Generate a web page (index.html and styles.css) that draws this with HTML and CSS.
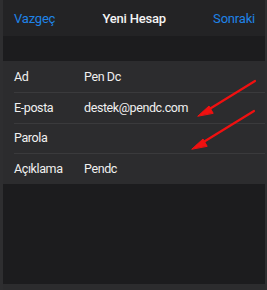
FILE: index.html
```html
<!DOCTYPE html>
<html lang="tr">
<head>
  <meta charset="UTF-8">
  <title>Yeni Hesap</title>
  <link rel="stylesheet" href="styles.css">
</head>
<body>
  <div class="screen">
    <div class="navbar">
      <span class="nav-btn">Vazgeç</span>
      <span class="nav-title">Yeni Hesap</span>
      <span class="nav-btn">Sonraki</span>
    </div>
    <div class="gap-band"></div>
    <div class="form">
      <div class="row"><span class="label">Ad</span><span class="value">Pen Dc</span></div>
      <div class="row"><span class="label">E-posta</span><span class="value">destek@pendc.com</span></div>
      <div class="row"><span class="label">Parola</span><span class="value"></span></div>
      <div class="row"><span class="label">Açıklama</span><span class="value">Pendc</span></div>
      <svg class="arrows" width="267" height="130" viewBox="0 55 267 130">
        <g stroke="#f01010" stroke-width="2.2" stroke-linecap="round" fill="#f01010">
          <line x1="255" y1="75" x2="203" y2="107"/>
          <polygon points="198,110 209,100 213,107" stroke-width="1"/>
          <line x1="254" y1="105" x2="197" y2="140"/>
          <polygon points="192,143 203,133 207,140" stroke-width="1"/>
        </g>
      </svg>
    </div>
    <div class="empty"></div>
    <div class="bottom-strip"></div>
  </div>
</body>
</html>
```

FILE: styles.css
```css
* { box-sizing: border-box; }
html, body { margin: 0; padding: 0; background: #3a3a3c; }
body { font-family: Roboto, "Liberation Sans", sans-serif; }
.screen {
  width: 267px; height: 290px;
  background: #1c1c1e;
  border-left: 3px solid #2e2e30;
  border-right: 2px solid #2e2e30;
  overflow: hidden;
  position: relative;
}
.navbar {
  height: 36px;
  background: #232325;
  display: flex;
  justify-content: space-between;
  align-items: center;
  padding: 0 10px 0 11px;
  font-size: 13px;
  letter-spacing: -0.2px;
}
.nav-btn { color: #1f83e8; }
.nav-title { color: #f4f4f4; font-weight: 500; }
.gap-band { height: 25px; background: #1c1c1e; }
.form { background: #2c2c2e; position: relative; }
.row {
  height: 30.75px;
  display: flex;
  align-items: center;
  padding-left: 11px;
  font-size: 12.5px;
  letter-spacing: -0.4px;
  color: #f0f0f0;
  position: relative;
}
.row + .row::before {
  content: '';
  position: absolute;
  top: 0; left: 11px; right: 0;
  height: 1px;
  background: #3a3a3c;
}
.label { width: 70px; }
.arrows { position: absolute; left: -3px; top: 0; }
.empty { height: 100px; }
.bottom-strip { height: 6px; background: #2c2c2e; }
```
